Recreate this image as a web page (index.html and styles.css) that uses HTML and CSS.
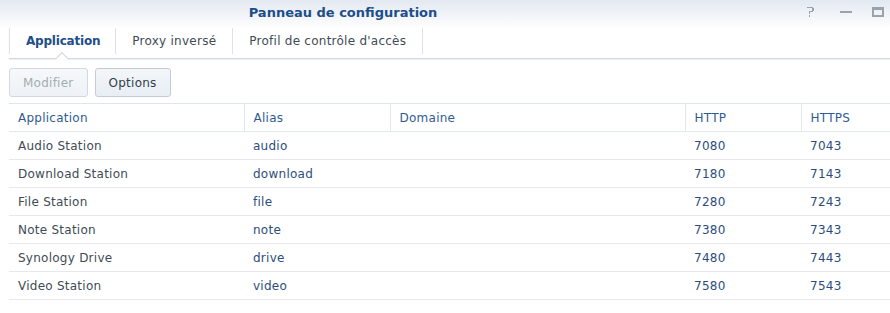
FILE: index.html
```html
<!DOCTYPE html>
<html lang="fr">
  <head>
    <meta charset="UTF-8" />
    <title>Panneau de configuration</title>
    <link rel="stylesheet" href="styles.css">
  </head>
  <body>
    <div class="window">
      <header class="titlebar">
        <div class="title">Panneau de configuration</div>
        <div class="controls">
          <svg class="ic-help" width="7" height="10" viewBox="0 0 7 10">
            <path d="M0 0h6v1h1v3h-1v1h-3v2h-1v-3h3v-3h-5z" fill="#9aa2ab"/>
            <rect x="2" y="8" width="1" height="2" fill="#9aa2ab"/>
          </svg>
          <svg class="ic-min" width="12" height="12" viewBox="0 0 12 12">
            <rect x="0" y="5" width="12" height="2" fill="#9aa2ab"/>
          </svg>
          <svg class="ic-max" width="12" height="10" viewBox="0 0 12 10">
            <path d="M0 0h12v10h-12z M2 3v5h8v-5z" fill="#9aa2ab" fill-rule="evenodd"/>
          </svg>
        </div>
      </header>

      <nav class="tabs">
        <div class="tab active">Application</div>
        <div class="tab">Proxy inversé</div>
        <div class="tab">Profil de contrôle d'accès</div>
      </nav>

      <div class="toolbar">
        <button class="btn" disabled>Modifier</button>
        <button class="btn">Options</button>
      </div>

      <table class="grid">
        <colgroup>
          <col class="c-app">
          <col class="c-alias">
          <col class="c-dom">
          <col class="c-http">
          <col>
        </colgroup>
        <thead>
          <tr>
            <th>Application</th>
            <th>Alias</th>
            <th>Domaine</th>
            <th>HTTP</th>
            <th>HTTPS</th>
          </tr>
        </thead>
        <tbody>
          <tr><td class="name">Audio Station</td><td>audio</td><td></td><td>7080</td><td>7043</td></tr>
          <tr><td class="name">Download Station</td><td>download</td><td></td><td>7180</td><td>7143</td></tr>
          <tr><td class="name">File Station</td><td>file</td><td></td><td>7280</td><td>7243</td></tr>
          <tr><td class="name">Note Station</td><td>note</td><td></td><td>7380</td><td>7343</td></tr>
          <tr><td class="name">Synology Drive</td><td>drive</td><td></td><td>7480</td><td>7443</td></tr>
          <tr><td class="name">Video Station</td><td>video</td><td></td><td>7580</td><td>7543</td></tr>
        </tbody>
      </table>
    </div>
  </body>
</html>
```

FILE: styles.css
```css
body {
  margin: 0;
  background: #fff;
  font-family: "DejaVu Sans", Verdana, sans-serif;
  font-size: 12px;
  letter-spacing: 0.25px;
  color: #414b55;
}

.window {
  width: 890px;
  height: 313px;
  overflow: hidden;
}

.titlebar {
  height: 27px;
  position: relative;
  background: linear-gradient(#e3e9f1, #fdfdfe);
}
.title {
  text-align: center;
  padding-top: 5px;
  padding-right: 204px;
  font-size: 13px;
  font-weight: bold;
  letter-spacing: 0;
  color: #1d4e8a;
}
.controls {
  position: absolute;
  right: 6px;
  top: 6px;
  display: flex;
  align-items: flex-start;
}
.controls svg {
  display: block;
}
.ic-help {
  margin-top: 1px;
}
.ic-min {
  margin-left: 26px;
}
.ic-max {
  margin-left: 20px;
  margin-top: 1px;
}

.tabs {
  display: flex;
  margin: 0 0 0 9px;
  height: 31px;
  border-bottom: 1px solid #d3d6da;
  box-shadow: 0 1px 1px #eef0f2;
}
.tab {
  position: relative;
  padding: 0 16px;
  line-height: 27px;
  margin-top: 1px;
  height: 26px;
  border-right: 1px solid #dde2e8;
  color: #414b55;
}
.tab:first-child {
  border-left: 1px solid #dde2e8;
}
.tab.active {
  font-weight: bold;
  letter-spacing: -0.2px;
  color: #1d4e8a;
  padding-right: 15px;
}
.tab.active::after {
  content: "";
  position: absolute;
  left: 50%;
  bottom: -6px;
  width: 9px;
  height: 9px;
  margin-left: -6px;
  background: #fff;
  border-left: 1px solid #d3d6da;
  border-top: 1px solid #d3d6da;
  transform: translateY(4px) rotate(45deg);
}

.toolbar {
  display: flex;
  gap: 7px;
  padding: 9px 0 0 9px;
  height: 28px;
}
.btn {
  height: 29px;
  padding: 0 13px;
  border: 1px solid #c3ccd6;
  border-radius: 3px;
  background: linear-gradient(#f3f6f9, #e8eef4);
  font-family: inherit;
  font-size: 12px;
  letter-spacing: 0.25px;
  color: #33404c;
}
.btn:disabled {
  color: #a3acb5;
  background: linear-gradient(#f6f8fa, #eef2f6);
  border-color: #d1d8e0;
}

.grid {
  margin: 7px 0 0 9px;
  width: 881px;
  border-collapse: collapse;
  table-layout: fixed;
}
.grid th,
.grid td {
  height: 27px;
  padding: 0 9px;
  text-align: left;
  white-space: nowrap;
  border-bottom: 1px solid #e6eaee;
}
.grid th {
  font-weight: normal;
  color: #2f5b95;
  border-top: 1px solid #dfe5ec;
  border-bottom: 1px solid #e3e8ee;
  border-right: 1px solid #e3e8ee;
}
.grid th:last-child {
  border-right: none;
}
.grid td {
  color: #2c4d7c;
}
.grid td.name {
  color: #414b55;
}
.c-app { width: 235px; }
.c-alias { width: 146px; }
.c-dom { width: 295px; }
.c-http { width: 116px; }
```
